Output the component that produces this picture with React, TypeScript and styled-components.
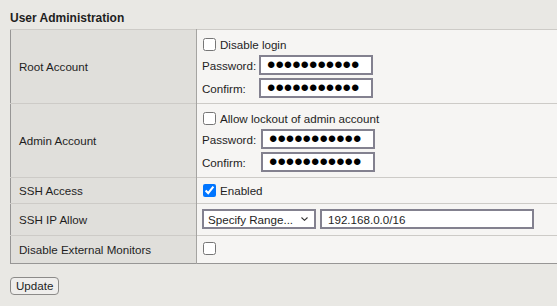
import React, { useState } from 'react';
import styled, { createGlobalStyle } from 'styled-components';

const GlobalStyle = createGlobalStyle`
  html, body {
    margin: 0;
    padding: 0;
    overflow: hidden;
    background: #e9e8e4;
  }
  body {
    font-family: "Liberation Sans", Arial, sans-serif;
    font-size: 11.6px;
    color: #1e1e1e;
  }
`;

const Page = styled.div`
  padding: 11px 10px 12px 10px;
  width: 620px;
`;

const Heading = styled.h2`
  margin: 0 0 3px 0;
  font-size: 12px;
  font-weight: 700;
  line-height: 15px;
`;

const Table = styled.table`
  width: 620px;
  border-collapse: collapse;
  border: 1px solid #979695;
`;

const Row = styled.tr`
  border-top: 1px solid #cdcbc7;
`;

const LabelCell = styled.td`
  width: 177px;
  padding: 0 0 0 8px;
  background: #e0dfdb;
  border-right: 1px solid #a5a4a1;
  vertical-align: middle;
  line-height: 14px;
`;

const ValueCell = styled.td<{ $pad?: string }>`
  background: #f6f5f3;
  padding: ${p => p.$pad || '4px 5px'};
  vertical-align: middle;
`;

const Stack = styled.div`
  display: flex;
  flex-direction: column;
  gap: 2px;
`;

const CheckLine = styled.label`
  display: flex;
  align-items: center;
  gap: 4px;
  height: 18px;
`;

const Check = styled.input`
  width: 13px;
  height: 13px;
  margin: 0 0 0 1px;
`;

const FieldGrid = styled.div<{ $label: number }>`
  display: grid;
  grid-template-columns: ${p => p.$label}px auto;
  align-items: center;
  row-gap: 3px;
`;

const TextBox = styled.input<{ $w: number }>`
  box-sizing: border-box;
  width: ${p => p.$w}px;
  height: 20px;
  border: 2px solid #83818f;
  border-radius: 0;
  background: #ffffff;
  padding: 0 6px;
  font-family: "Liberation Sans", Arial, sans-serif;
  font-size: 11.6px;
  color: #1e1e1e;
  outline: none;
`;

const PasswordBox = styled(TextBox)`
  padding: 0 0 0 6px;
  font-size: 24px;
  line-height: 16px;
  color: #000000;
`;

const Inline = styled.div`
  display: flex;
  align-items: center;
  gap: 4px;
`;

const SelectWrap = styled.div`
  position: relative;
  width: 114px;
  height: 20px;
`;

const Select = styled.select`
  box-sizing: border-box;
  width: 114px;
  height: 20px;
  border: 2px solid #83818f;
  border-radius: 0;
  background: #ffffff;
  padding: 0 14px 0 4px;
  appearance: none;
  font-family: "Liberation Sans", Arial, sans-serif;
  font-size: 11.6px;
  color: #1e1e1e;
`;

const Chevron = styled.svg`
  position: absolute;
  right: 8px;
  top: 8px;
  pointer-events: none;
`;

const UpdateButton = styled.button`
  margin-top: 13px;
  height: 18px;
  padding: 0 5px;
  border: 1px solid #8c8b89;
  border-radius: 4px;
  background: #efeeec;
  font-family: "Liberation Sans", Arial, sans-serif;
  font-size: 11.6px;
  color: #1e1e1e;
  line-height: 14px;
`;

const PasswordFields: React.FC<{ label: number }> = ({ label }) => (
  <FieldGrid $label={label}>
    <span>Password:</span>
    <PasswordBox $w={114} type="password" defaultValue="***********" readOnly />
    <span>Confirm:</span>
    <PasswordBox $w={114} type="password" defaultValue="***********" readOnly />
  </FieldGrid>
);

const App: React.FC = () => {
  const [sshEnabled, setSshEnabled] = useState(true);
  const [range, setRange] = useState('192.168.0.0/16');

  return (
    <Page>
      <GlobalStyle />
      <Heading>User Administration</Heading>
      <Table>
        <tbody>
          <Row>
            <LabelCell>Root Account</LabelCell>
            <ValueCell $pad="5px 5px 5px 5px">
              <Stack>
                <CheckLine>
                  <Check type="checkbox" />
                  Disable login
                </CheckLine>
                <PasswordFields label={57} />
              </Stack>
            </ValueCell>
          </Row>
          <Row>
            <LabelCell>Admin Account</LabelCell>
            <ValueCell $pad="5px 5px 5px 5px">
              <Stack>
                <CheckLine>
                  <Check type="checkbox" />
                  Allow lockout of admin account
                </CheckLine>
                <PasswordFields label={59} />
              </Stack>
            </ValueCell>
          </Row>
          <Row>
            <LabelCell>SSH Access</LabelCell>
            <ValueCell $pad="3px 5px 4px 5px">
              <CheckLine>
                <Check
                  type="checkbox"
                  checked={sshEnabled}
                  onChange={e => setSshEnabled(e.target.checked)}
                />
                Enabled
              </CheckLine>
            </ValueCell>
          </Row>
          <Row>
            <LabelCell>SSH IP Allow</LabelCell>
            <ValueCell $pad="5px 5px 6px 5px">
              <Inline>
                <SelectWrap>
                  <Select defaultValue="range">
                    <option value="any">Any</option>
                    <option value="range">Specify Range...</option>
                  </Select>
                  <Chevron width="7" height="4" viewBox="0 0 7 4">
                    <path d="M0.5 0.5 L3.5 3.3 L6.5 0.5" fill="none" stroke="#333" strokeWidth="1.1" />
                  </Chevron>
                </SelectWrap>
                <TextBox $w={214} type="text" value={range} onChange={e => setRange(e.target.value)} />
              </Inline>
            </ValueCell>
          </Row>
          <Row>
            <LabelCell>Disable External Monitors</LabelCell>
            <ValueCell $pad="3px 5px 6px 5px">
              <CheckLine>
                <Check type="checkbox" />
              </CheckLine>
            </ValueCell>
          </Row>
        </tbody>
      </Table>
      <UpdateButton>Update</UpdateButton>
    </Page>
  );
};

export default App;
